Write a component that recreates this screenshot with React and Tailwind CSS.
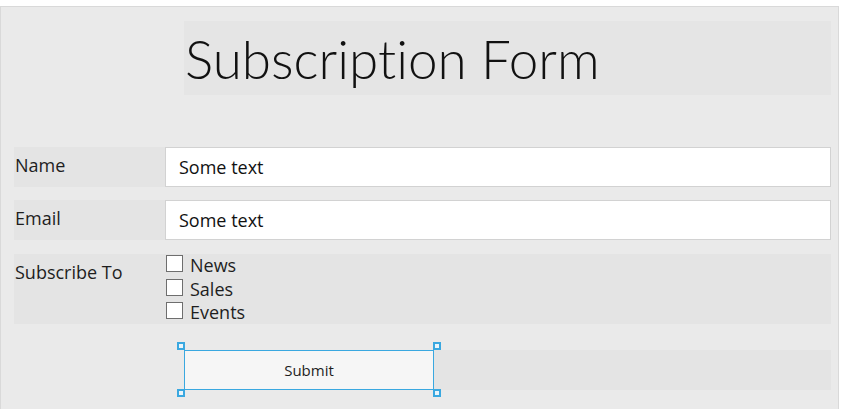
// Subscription form designer preview

const body = { fontFamily: '"Open Sans", "Noto Sans", sans-serif' };
const title = { fontFamily: 'Lato, "Open Sans", sans-serif' };

function TextRow({ label, value }) {
  return (
    <div className="flex h-[40px] bg-[#e4e4e4]">
      <div className="w-[151px] pt-[6px] pl-[1px] text-[18px] leading-[24px] text-[#1e1e1e]">
        {label}
      </div>
      <div className="flex-1 border border-[#d2d2d2] bg-white pl-[13px] pt-[7px] text-[18px] leading-[24px] text-[#111]">
        {value}
      </div>
    </div>
  );
}

function Check({ label }) {
  return (
    <div className="flex h-[23.5px] items-start gap-[7px]">
      <span className="mt-[1px] h-[17px] w-[17px] border border-[#6e6e6e] bg-white" />
      <span className="text-[18px] leading-[23.5px] text-[#1e1e1e]">{label}</span>
    </div>
  );
}

function Handle({ className }) {
  return (
    <span
      className={`absolute h-[8px] w-[8px] border-2 border-[#3aa8e0] bg-[#eaf5fb] ${className}`}
    />
  );
}

export default function App() {
  return (
    <div className="min-h-screen bg-white pt-[6px]" style={body}>
      <div className="min-h-[403px] w-[839px] border border-b-0 border-[#d9d9d9] bg-[#eaeaea] pl-[13px] pr-[7px] pt-[14px]">
        {/* Title */}
        <div className="ml-[170px] h-[74px] bg-[#e5e5e5] pl-[1px] pt-[1px]">
          <h1
            className="text-[53px] font-light leading-[74px] text-[#111] [font-variant-ligatures:none]"
            style={title}
          >
            Subscription Form
          </h1>
        </div>

        {/* Fields */}
        <div className="mt-[52px] flex flex-col">
          <TextRow label="Name" value="Some text" />
          <div className="mt-[13px]">
            <TextRow label="Email" value="Some text" />
          </div>
          <div className="mt-[14px] flex h-[70px] bg-[#e4e4e4]">
            <div className="w-[152px] pt-[6px] pl-[1px] text-[18px] leading-[24px] text-[#1e1e1e]">
              Subscribe To
            </div>
            <div className="flex flex-col">
              <Check label="News" />
              <Check label="Sales" />
              <Check label="Events" />
            </div>
          </div>
        </div>

        {/* Submit */}
        <div className="ml-[170px] mt-[26px] h-[40px] bg-[#e4e4e4]">
          <div className="relative h-full w-[250px]">
            <button className="h-full w-full border-[1.5px] border-[#3aa8e0] bg-[#f6f6f6] text-[15px] text-[#1e1e1e]">
              Submit
            </button>
            <Handle className="-left-[7px] -top-[8px]" />
            <Handle className="-right-[7px] -top-[8px]" />
            <Handle className="-bottom-[7px] -left-[7px]" />
            <Handle className="-bottom-[7px] -right-[7px]" />
          </div>
        </div>
      </div>
    </div>
  );
}
